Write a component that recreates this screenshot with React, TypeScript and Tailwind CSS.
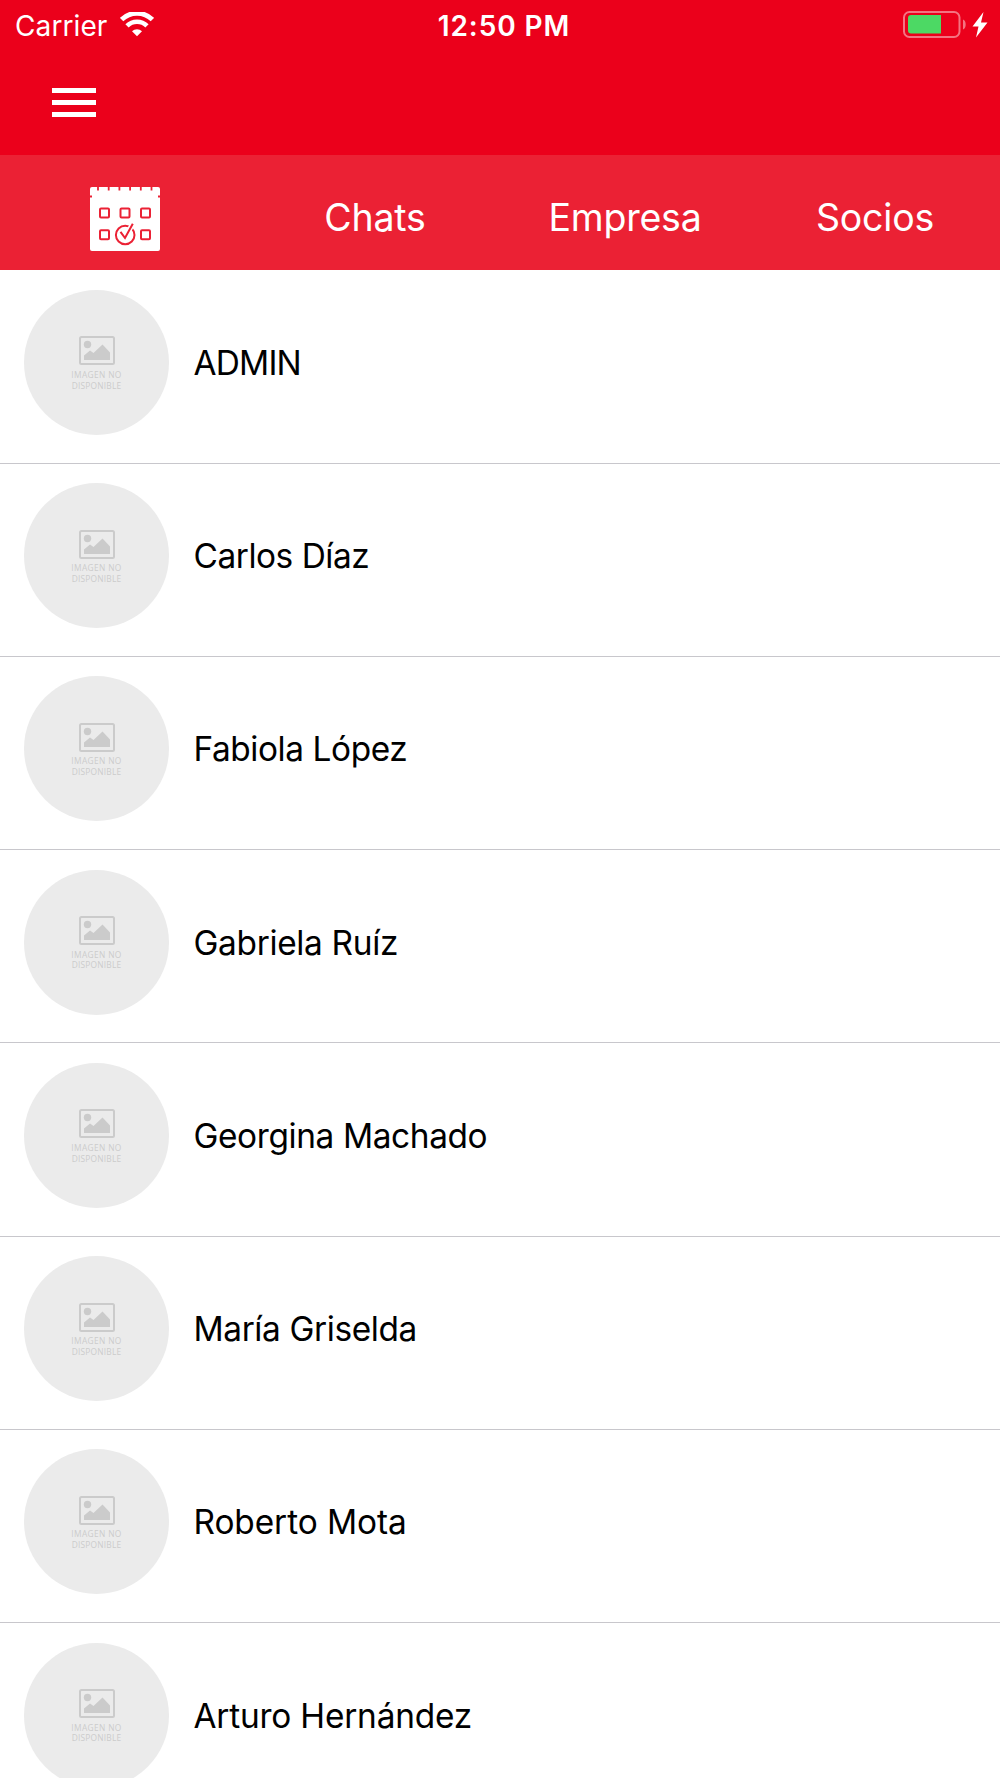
import React, { useState } from 'react';

const CONTACTS = [
  { name: 'ADMIN', tracking: 'tracking-[-0.8px]' },
  { name: 'Carlos Díaz', tracking: 'tracking-[-0.45px]' },
  { name: 'Fabiola López', tracking: 'tracking-[-0.42px]' },
  { name: 'Gabriela Ruíz', tracking: 'tracking-[-0.32px]' },
  { name: 'Georgina Machado', tracking: 'tracking-[-0.38px]' },
  { name: 'María Griselda', tracking: 'tracking-[-0.38px]' },
  { name: 'Roberto Mota', tracking: 'tracking-[-0.08px]' },
  { name: 'Arturo Hernández', tracking: 'tracking-[-0.2px]' },
];

const TABS = ['Calendario', 'Chats', 'Empresa', 'Socios'];

const WifiIcon = () => (
  <svg width="34" height="25" viewBox="0 0 34 25" fill="none" className="mb-[3px] ml-[13px]">
    <path d="M1.6 7.6a21.8 21.8 0 0 1 30.8 0" stroke="white" strokeWidth="4.8" />
    <path d="M7 13.8a14.2 14.2 0 0 1 20 0" stroke="white" strokeWidth="4.6" />
    <path d="M12 19.2a7.1 7.1 0 0 1 10 0l-5 5z" fill="white" />
  </svg>
);

const BatteryIcon = () => (
  <svg width="86" height="30" viewBox="0 0 86 30" fill="none" className="mb-[2px]">
    <rect x="1" y="2" width="55.5" height="25" rx="5.5" stroke="white" strokeOpacity="0.45" strokeWidth="2" />
    <path d="M5 8a3 3 0 0 1 3-3h30v18.500H8a3 3 0 0 1-3-3z" fill="#4cd964" />
    <path d="M60 9.500c3.600 1 3.600 9 0 10z" fill="white" fillOpacity="0.45" />
    <path d="M80.500 2 69.500 16.500h6L73 27.500 84.500 12.500h-6.500z" fill="white" />
  </svg>
);

const CalendarIcon = () => (
  <svg width="72" height="66" viewBox="0 0 72 66" fill="none" className="mt-px mr-px">
    <path d="M1 3a2 2 0 0 1 2-2h66a2 2 0 0 1 2 2v60a2 2 0 0 1-2 2H3a2 2 0 0 1-2-2z" fill="white" />
    <path
      d="M9 0v4.500M19.700 0v4.500M30.400 0v4.500M41.100 0v4.500M51.800 0v4.500M62.500 0v4.500M0 10.500h3M69 10.500h3"
      stroke="#eb2134"
      strokeWidth="1.800"
    />
    <g stroke="#eb2134" strokeWidth="2">
      <rect x="11" y="22.500" width="9" height="9" rx="1" />
      <rect x="31.500" y="22.500" width="9" height="9" rx="1" />
      <rect x="52" y="22.500" width="9" height="9" rx="1" />
      <rect x="11" y="44.300" width="9" height="9" rx="1" />
      <rect x="52" y="44.300" width="9" height="9" rx="1" />
      <circle cx="36.200" cy="49" r="9.300" />
    </g>
    <path d="M31.500 46.500l4.500 5.500 7.500-14" stroke="white" strokeWidth="5" />
    <path d="M31.500 45.800l4.500 6.200 7.800-14.200" stroke="#eb2134" strokeWidth="2" />
  </svg>
);

const Avatar = () => (
  <div className="flex h-[145px] w-[145px] shrink-0 flex-col items-center rounded-full bg-[#ebebeb] pt-[46.500px] font-['Open_Sans',sans-serif] text-[8.400px] leading-[10.700px] tracking-[0.2px] text-[#cbcbcb]">
    <svg width="36" height="29" viewBox="0 0 36 29" fill="#cbcbcb" className="mb-[4.500px]">
      <rect x="1" y="1" width="34" height="27" rx="1.500" fill="none" stroke="#cbcbcb" strokeWidth="2" />
      <circle cx="8.500" cy="8.500" r="3.700" />
      <path d="M5 19.500l6-5 3.500 2.500 9-8.500 7.500 8V24H5z" />
    </svg>
    <span className="tracking-[0.35px]">IMAGEN NO</span>
    <span>DISPONIBLE</span>
  </div>
);

export default function App() {
  const [activeTab, setActiveTab] = useState('Socios');

  return (
    <div className="flex h-[1778px] w-[1000px] flex-col overflow-hidden bg-white font-['Inter',sans-serif]">
      {/* Status bar + menu */}
      <header className="h-[154.700px] shrink-0 bg-[#eb001b] text-white">
        <div className="grid h-[50px] grid-cols-3 items-center pt-px pr-[11px] pl-[15px] text-[28px] leading-[50px]">
          <div className="flex items-center">
            <span className="tracking-[0.1px]">Carrier</span>
            <WifiIcon />
          </div>
          <span className="pl-[4px] text-center font-semibold tracking-[0.9px]">12:50 PM</span>
          <div className="flex justify-end">
            <BatteryIcon />
          </div>
        </div>
        <button aria-label="Menu" className="mt-[38px] ml-[52px] flex w-[44px] flex-col gap-[7px]">
          <span className="h-[5px] w-full bg-white" />
          <span className="h-[5px] w-full bg-white" />
          <span className="h-[5px] w-full bg-white" />
        </button>
      </header>

      {/* Tabs */}
      <nav className="grid h-[115.700px] shrink-0 grid-cols-4 bg-[#eb2134] pt-[12px] text-[37.500px] tracking-[-0.2px] text-white">
        {TABS.map((tab) => (
          <button
            key={tab}
            aria-label={tab}
            onClick={() => setActiveTab(tab)}
            aria-current={activeTab === tab}
            className="flex items-center justify-center"
          >
            {tab === 'Calendario' ? <CalendarIcon /> : tab}
          </button>
        ))}
      </nav>

      {/* Contact list */}
      <ul>
        {CONTACTS.map(({ name, tracking }) => (
          <li key={name} className="flex h-[193.250px] items-start border-b border-[#c8c7cc] pt-[19.500px] pl-[24px]">
            <Avatar />
            <span className={`ml-[24.500px] pt-px text-[33.400px] leading-[145px] text-black ${tracking}`}>{name}</span>
          </li>
        ))}
      </ul>
    </div>
  );
}
